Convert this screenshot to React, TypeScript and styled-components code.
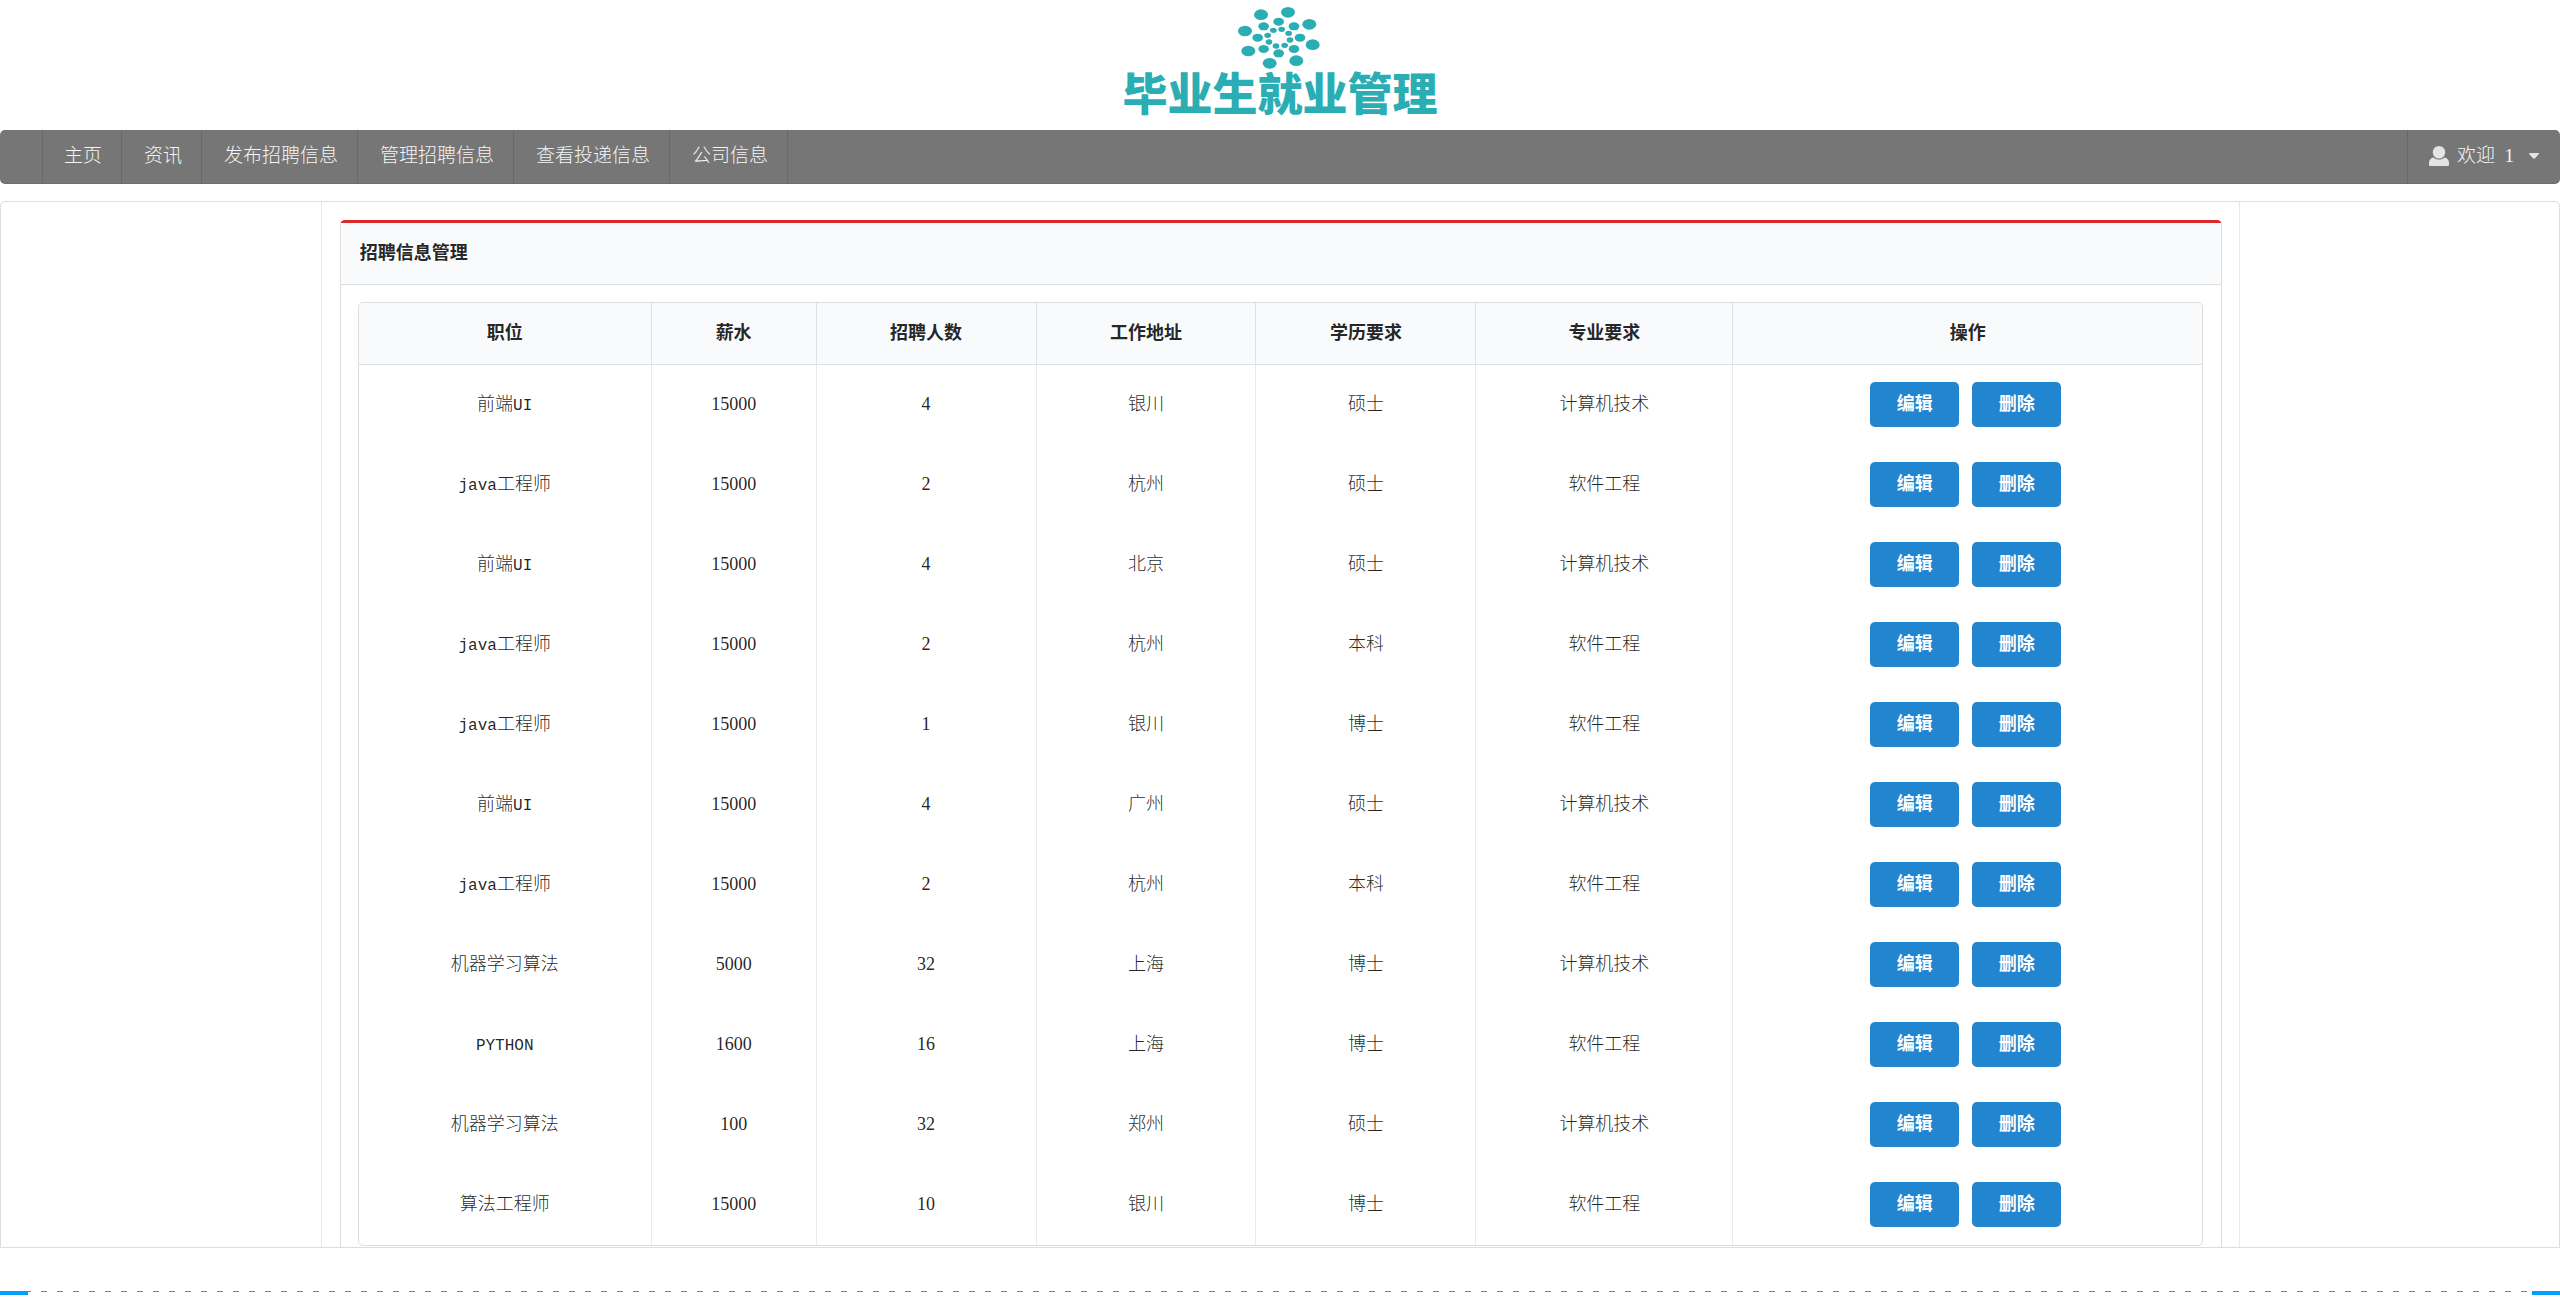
import React from "react";
import styled, { createGlobalStyle } from "styled-components";

const GlobalStyle = createGlobalStyle`
  *, *::before, *::after { box-sizing: border-box; }
  body {
    margin: 0;
    background: #fff;
    color: rgba(0, 0, 0, 0.87);
    font-family: "Liberation Serif", "Noto Sans CJK SC", serif;
    font-size: 18px;
    font-weight: 300;
    line-height: 26px;
  }
`;

const BrandHeader = styled.header`
  display: flex;
  flex-direction: column;
  align-items: center;
  height: 130px;
  color: #2aaeb4;
`;

const BrandMark = styled.svg`
  display: block;
  width: 90px;
  height: 70px;
  fill: currentColor;
`;

const BrandName = styled.h1`
  margin: 0;
  font-family: "Noto Sans CJK SC", sans-serif;
  font-size: 45px;
  font-weight: 900;
  line-height: 44px;
`;

const NavBar = styled.nav`
  display: flex;
  height: 54px;
  padding-left: 42px;
  border-radius: 5px;
  background: #767676;
  font-size: 19px;
  box-shadow: inset 0 -1px 0 rgba(34, 36, 38, 0.1);
`;

const NavList = styled.ul`
  display: flex;
  flex: 1;
  margin: 0;
  padding: 0;
  list-style: none;
  box-shadow: inset 1px 0 0 rgba(34, 36, 38, 0.15);
`;

const NavLink = styled.a`
  display: flex;
  align-items: center;
  height: 54px;
  padding: 0 20px 2px 22px;
  color: #f5f5f5;
  text-decoration: none;
  box-shadow: inset -1px 0 0 rgba(34, 36, 38, 0.15);
`;

const UserMenu = styled.button`
  display: flex;
  align-items: center;
  gap: 7px;
  padding: 0 21px 2px 22px;
  border: 0;
  background: none;
  color: #f5f5f5;
  font: inherit;
  box-shadow: inset 1px 0 0 rgba(34, 36, 38, 0.15);
`;

const UserName = styled.span`
  margin: 0 8px 0 1px;
`;

const Glyph = styled.svg`
  display: block;
  fill: #e4e4e4;
`;

const Frame = styled.main`
  display: grid;
  grid-template-columns: 1fr 6fr 1fr;
  margin-top: 17px;
  border: 1px solid #dcdddd;
  border-radius: 5px 5px 0 0;
`;

const Center = styled.div`
  padding: 18px 17px 0 18px;
  border-left: 1px solid #e8e9e9;
`;

const SideColumn = styled.div`
  & + ${Center} + & { border-left: 1px solid #e8e9e9; }
`;

const Panel = styled.section`
  border: 1px solid #dcdddd;
  border-top: 3px solid #db2828;
  border-bottom: 0;
  border-radius: 5px 5px 0 0;
`;

const PanelTitle = styled.h2`
  margin: 0;
  padding: 17px 18px 18px 19px;
  border-bottom: 1px solid #dfe0e1;
  background: #f9fafb;
  font-size: 18px;
  font-weight: 600;
  line-height: 26px;
`;

const PanelBody = styled.div`
  padding: 17px 18px 1px 17px;
`;

const Table = styled.table`
  width: 100%;
  border: 1px solid #dcdddd;
  border-radius: 5px;
  border-collapse: separate;
  border-spacing: 0;
  overflow: hidden;
  table-layout: fixed;
  text-align: center;
`;

const HeadCell = styled.th`
  height: 62px;
  padding: 0 14px 2px;
  border-bottom: 1px solid #dfe0e1;
  background: #f9fafb;
  font-weight: 600;
  & + & { border-left: 1px solid #dfe0e1; }
`;

const Cell = styled.td`
  height: 80px;
  padding: 0 14px 2px;
  & + & { border-left: 1px solid #e8e9e9; }
`;

const Latin = styled.span`
  font-family: "Liberation Mono", monospace;
  font-size: 16px;
  line-height: 16px;
`;

const Actions = styled.div`
  display: flex;
  justify-content: center;
  gap: 13px;
  padding: 1px 4px 0 0;
`;

const ActionButton = styled.button`
  width: 89px;
  height: 45px;
  padding: 0 0 1px;
  border: 0;
  border-radius: 5px;
  background: #2185d0;
  color: #fff;
  font: inherit;
  font-weight: 700;
`;

const FooterRule = styled.div`
  display: flex;
  justify-content: space-between;
  height: 4px;
  margin-top: 43px;
  background: linear-gradient(90deg, #0fa0f5 6px, transparent 6px) 9px 0 / 16px 1px repeat-x;
`;

const RuleEnd = styled.span`
  width: 28px;
  background: #01a0ff;
`;

const outerDots = [[483, 44], [564, 37], [628, 73], [638, 134], [589, 182], [509, 190], [445, 153], [435, 93]];
const middleDots = [[536, 65], [582, 79], [600, 113], [582, 147], [536, 160], [491, 147], [473, 113], [491, 79]];
const innerDots = [[520, 91], [545, 88], [566, 100], [570, 120], [554, 136], [528, 138], [507, 126], [503, 106]];

const dotRings = [
  { dots: outerDots, rx: 21, ry: 16 },
  { dots: middleDots, rx: 16, ry: 12 },
  { dots: innerDots, rx: 10, ry: 8 },
];

const navItems = ["主页", "资讯", "发布招聘信息", "管理招聘信息", "查看投递信息", "公司信息"];

const columns = [
  { label: "职位", share: 292 },
  { label: "薪水", share: 165 },
  { label: "招聘人数", share: 220 },
  { label: "工作地址", share: 220 },
  { label: "学历要求", share: 220 },
  { label: "专业要求", share: 257 },
  { label: "操作", share: 470 },
];
const totalShare = columns.reduce((sum, column) => sum + column.share, 0);

const jobs = [
  ["前端UI", "15000", "4", "银川", "硕士", "计算机技术"],
  ["java工程师", "15000", "2", "杭州", "硕士", "软件工程"],
  ["前端UI", "15000", "4", "北京", "硕士", "计算机技术"],
  ["java工程师", "15000", "2", "杭州", "本科", "软件工程"],
  ["java工程师", "15000", "1", "银川", "博士", "软件工程"],
  ["前端UI", "15000", "4", "广州", "硕士", "计算机技术"],
  ["java工程师", "15000", "2", "杭州", "本科", "软件工程"],
  ["机器学习算法", "5000", "32", "上海", "博士", "计算机技术"],
  ["PYTHON", "1600", "16", "上海", "博士", "软件工程"],
  ["机器学习算法", "100", "32", "郑州", "硕士", "计算机技术"],
  ["算法工程师", "15000", "10", "银川", "博士", "软件工程"],
];

// Latin words are set in a monospaced face, about half the width of a Han character.
function MixedText({ text }: { text: string }) {
  return (
    <>
      {text.split(/([A-Za-z]+)/).filter(Boolean).map((part, i) =>
        /^[A-Za-z]/.test(part) ? <Latin key={i}>{part}</Latin> : part
      )}
    </>
  );
}

export default function App() {
  return (
    <>
      <GlobalStyle />
      <BrandHeader>
        <BrandMark viewBox="405 0 270 210" aria-hidden="true">
          {dotRings.map(({ dots, rx, ry }) =>
            dots.map(([cx, cy]) => <ellipse key={`${cx}-${cy}`} cx={cx} cy={cy} rx={rx} ry={ry} />)
          )}
        </BrandMark>
        <BrandName>毕业生就业管理</BrandName>
      </BrandHeader>

      <NavBar>
        <NavList>
          {navItems.map((item) => (
            <li key={item}><NavLink href="#">{item}</NavLink></li>
          ))}
        </NavList>
        <UserMenu type="button">
          <Glyph width="20" height="20" viewBox="0 0 20 20" aria-hidden="true">
            <ellipse cx="10" cy="6.3" rx="6.2" ry="6.3" />
            <path d="M4.6 11.6C6 13 8 13.6 10 13.6s4-.6 5.400-2c2.600.4 4.600 2.400 4.600 5.400v1.400c0 1-.6 1.600-1.600 1.600H1.600C.6 20 0 19.400 0 18.400V17c0-3 2-5 4.600-5.400z" />
          </Glyph>
          <UserName>欢迎&nbsp;&nbsp;1</UserName>
          <Glyph width="10" height="6" viewBox="0 0 10 6" aria-hidden="true">
            <path d="M.8 0h8.400c.8 0 1 .7.5 1.200L5.700 5.500c-.4.400-1 .4-1.400 0L.3 1.200C-.2.700 0 0 .8 0z" />
          </Glyph>
        </UserMenu>
      </NavBar>

      <Frame>
        <SideColumn />
        <Center>
          <Panel>
            <PanelTitle>招聘信息管理</PanelTitle>
            <PanelBody>
              <Table>
                <colgroup>
                  {columns.map(({ label, share }) => (
                    <col key={label} style={{ width: `${(share / totalShare) * 100}%` }} />
                  ))}
                </colgroup>
                <thead>
                  <tr>
                    {columns.map(({ label }) => <HeadCell key={label} scope="col">{label}</HeadCell>)}
                  </tr>
                </thead>
                <tbody>
                  {jobs.map((job, row) => (
                    <tr key={row}>
                      {job.map((value, i) => <Cell key={i}><MixedText text={value} /></Cell>)}
                      <Cell>
                        <Actions>
                          <ActionButton type="button">编辑</ActionButton>
                          <ActionButton type="button">删除</ActionButton>
                        </Actions>
                      </Cell>
                    </tr>
                  ))}
                </tbody>
              </Table>
            </PanelBody>
          </Panel>
        </Center>
        <SideColumn />
      </Frame>

      <FooterRule>
        <RuleEnd />
        <RuleEnd />
      </FooterRule>
    </>
  );
}
